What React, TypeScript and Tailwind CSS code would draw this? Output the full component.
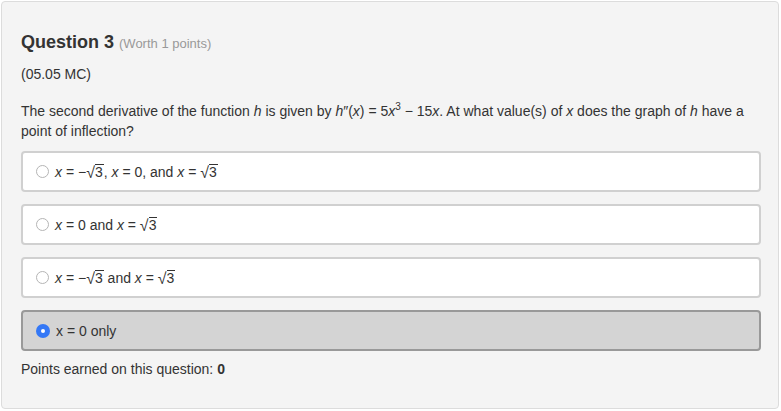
import React from "react";

const Sqrt3 = () => (
  <span className="whitespace-nowrap">
    <span className="text-[16px] relative top-[1px]">√</span>
    <span className="inline-block border-t border-[#333] leading-[14px] pr-[1px]">3</span>
  </span>
);

const X = () => <i>x</i>;

const Radio = ({ checked }: { checked?: boolean }) =>
  checked ? (
    <span className="w-[14px] h-[14px] rounded-full bg-[#3478f6] flex items-center justify-center shrink-0">
      <span className="w-[4px] h-[4px] rounded-full bg-white" />
    </span>
  ) : (
    <span className="w-[13px] h-[13px] rounded-full border border-[#b5b5b5] bg-white shrink-0" />
  );

const Option = ({ checked, children }: { checked?: boolean; children: React.ReactNode }) => (
  <div
    className={
      "h-[41px] rounded-[4px] border-2 flex items-center pl-[13px] gap-[6px] text-[14px] text-[#333] " +
      (checked ? "bg-[#d4d4d4] border-[#999]" : "bg-white border-[#d0d0d0]")
    }
  >
    <Radio checked={checked} />
    <span className="block leading-[20px] whitespace-pre">{children}</span>
  </div>
);

export default function App() {
  return (
    <div className="p-px" style={{ fontFamily: '"Liberation Sans", Arial, sans-serif' }}>
      <div className="w-[778px] h-[408px] border border-[#dcdcdc] rounded-[4px] bg-[#f4f4f4] pl-[19px] pr-[17px] pt-[28px] text-[#333]">
        <div className="flex items-baseline gap-[5px] leading-[24px]">
          <span className="text-[18px] font-bold text-[#333]">Question 3</span>
          <span className="text-[13px] text-[#999]">(Worth 1 points)</span>
        </div>
        <div className="mt-[8px] text-[14px] leading-[20px]">(05.05 MC)</div>
        <div className="mt-[17px] text-[14px] leading-[20px]">
          The second derivative of the function <i>h</i> is given by <i>h</i>″(<i>x</i>) = 5<i>x</i>
          <span className="text-[10px] leading-none relative -top-[6px]">3</span> − 15<i>x</i>. At what value(s) of <i>x</i> does the graph of <i>h</i> have a
          point of inflection?
        </div>
        <div className="mt-[10px] flex flex-col gap-[12px]">
          <Option>
            <X /> = −<Sqrt3 />, <X /> = 0, and <X /> = <Sqrt3 />
          </Option>
          <Option>
            <X /> = 0 and <X /> = <Sqrt3 />
          </Option>
          <Option>
            <X /> = −<Sqrt3 /> and <X /> = <Sqrt3 />
          </Option>
          <Option checked>x = 0 only</Option>
        </div>
        <div className="mt-[8px] text-[14px] leading-[20px]">
          Points earned on this question: <b>0</b>
        </div>
      </div>
    </div>
  );
}
